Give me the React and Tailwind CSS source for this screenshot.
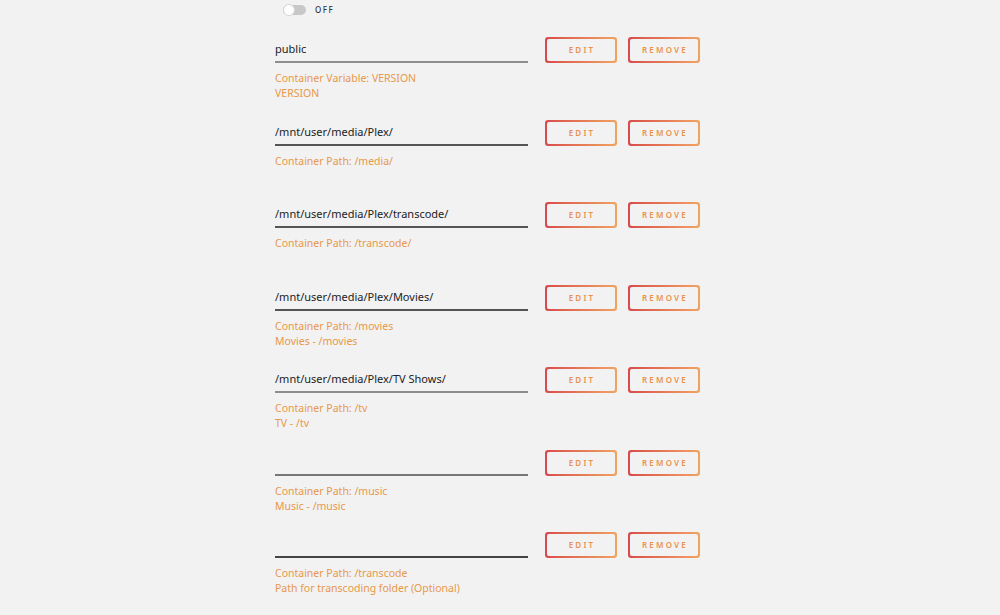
import React from 'react';

const rows = [
  { value: 'public', line: 'bg-[#8e8e8e]', notes: ['Container Variable: VERSION', 'VERSION'] },
  { value: '/mnt/user/media/Plex/', line: 'bg-[#555555]', notes: ['Container Path: /media/'] },
  { value: '/mnt/user/media/Plex/transcode/', line: 'bg-[#555555]', notes: ['Container Path: /transcode/'] },
  { value: '/mnt/user/media/Plex/Movies/', line: 'bg-[#555555]', notes: ['Container Path: /movies', 'Movies - /movies'] },
  { value: '/mnt/user/media/Plex/TV Shows/', line: 'bg-[#8e8e8e]', notes: ['Container Path: /tv', 'TV - /tv'] },
  { value: '', line: 'bg-[#777777]', notes: ['Container Path: /music', 'Music - /music'] },
  { value: '', line: 'bg-[#444444]', notes: ['Container Path: /transcode', 'Path for transcoding folder (Optional)'] },
  { value: '', line: 'bg-[#555555]', notes: [] },
];

const GradientButton = ({ children }) => (
  <div className="w-[72px] h-[26px] rounded-[3px] p-[2px] bg-gradient-to-r from-[#d84a4c] to-[#f0a361]">
    <button className="w-full h-full rounded-[2px] bg-[#f2f2f2] text-[8px] font-semibold tracking-[2.2px] text-[#e9924f] flex items-center justify-center pl-[2px]">
      {children}
    </button>
  </div>
);

const Toggle = () => (
  <div className="flex items-center gap-[9px] pl-[8px] h-[20px]">
    <div className="relative w-[23px] h-[10px] rounded-full bg-[#c8c8c8]">
      <div className="absolute left-0 top-[-1px] w-[12px] h-[12px] rounded-full bg-white border border-[#d6d6d6]" />
    </div>
    <span className="text-[8px] tracking-[1.5px] text-[#333] font-medium">OFF</span>
  </div>
);

const Row = ({ value, line, notes }) => (
  <div className="h-[82.5px]">
    <div className="flex items-end">
      <div className="w-[253px]">
        <div className="h-[23px] flex items-center text-[11px] text-[#222]">{value}</div>
        <div className={`h-[2px] ${line}`} />
      </div>
      <div className="flex gap-[11px] ml-[17px]">
        <GradientButton>EDIT</GradientButton>
        <GradientButton>REMOVE</GradientButton>
      </div>
    </div>
    <div className="mt-[8px] text-[10.5px] leading-[15px] text-[#e8984a]">
      {notes.map((n) => (
        <div key={n}>{n}</div>
      ))}
    </div>
  </div>
);

export default function App() {
  return (
    <div
      className="w-[1000px] h-[615px] overflow-hidden bg-[#f2f2f2]"
      style={{ fontFamily: '"Noto Sans", "Open Sans", sans-serif' }}
    >
      <div className="ml-[275px]">
        <Toggle />
        <div className="mt-[17px]">
          {rows.map((r, i) => (
            <Row key={i} {...r} />
          ))}
        </div>
      </div>
    </div>
  );
}
